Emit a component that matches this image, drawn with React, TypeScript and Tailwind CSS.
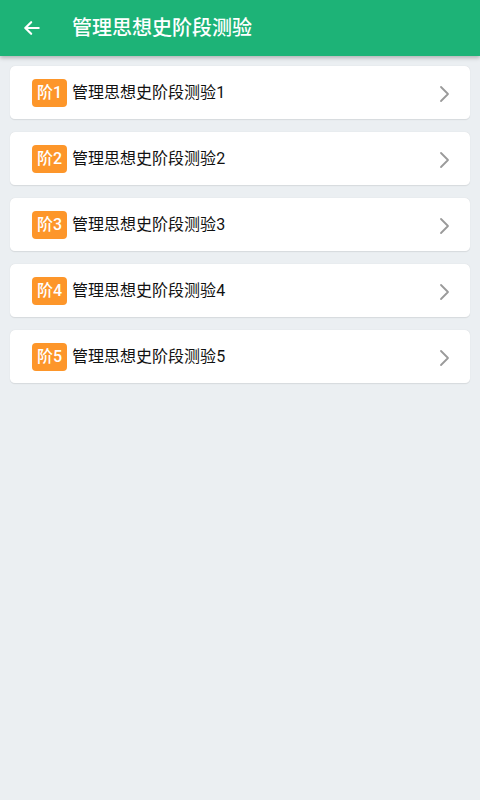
import React from "react";

const items = [1, 2, 3, 4, 5];

export default function App() {
  return (
    <div
      className="w-[480px] h-[800px] bg-[#ebeff2] flex flex-col"
      style={{ fontFamily: 'Roboto, "Noto Sans CJK SC", sans-serif' }}
    >
      <div className="h-[56px] bg-[#1db377] flex items-center shadow-[0_2px_4px_rgba(0,0,0,0.25)] relative z-10">
        <div className="w-[72px] flex items-center pl-[22px]">
          <svg width="20" height="20" viewBox="0 0 24 24" fill="none" stroke="white" strokeWidth="2.6" strokeLinecap="round" strokeLinejoin="round">
            <path d="M20 12H4.5" />
            <path d="M11 5l-7 7 7 7" />
          </svg>
        </div>
        <span className="text-white text-[20px] font-medium">管理思想史阶段测验</span>
      </div>
      <div className="flex flex-col gap-[12px] px-[10px] pt-[10px]">
        {items.map((n) => (
          <div
            key={n}
            className="h-[54px] bg-white rounded-[5px] border-b border-[#d8dcdf] shadow-[0_0_1px_rgba(0,0,0,0.15)] flex items-center pl-[22px] pr-[20px]"
          >
            <span className="h-[28px] px-[5px] rounded-[4px] bg-[#fd962a] text-white text-[16px] font-medium flex items-center justify-center">
              阶{n}
            </span>
            <span className="ml-[5px] text-[16px] text-[#111] font-normal">管理思想史阶段测验{n}</span>
            <svg className="ml-auto mt-[2px]" width="12" height="18" viewBox="0 0 12 18" fill="none" stroke="#9a9a9a" strokeWidth="1.8" strokeLinecap="round" strokeLinejoin="round">
              <path d="M3 2l7 7-7 7" />
            </svg>
          </div>
        ))}
      </div>
    </div>
  );
}
